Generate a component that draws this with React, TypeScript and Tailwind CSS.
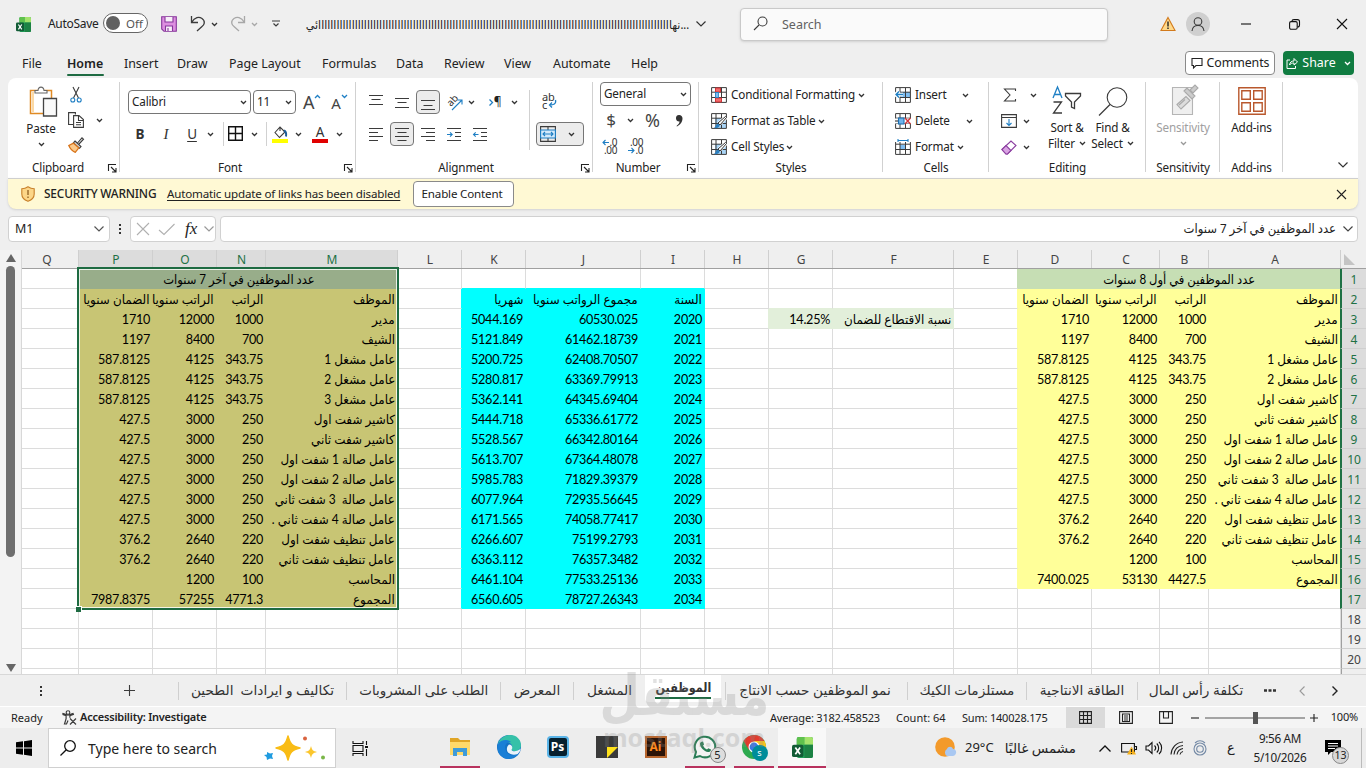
import type { ReactNode } from 'react';

type IconProps = { w?: number; h?: number; children: ReactNode; className?: string };

function Icon({ w = 16, h = 16, children, className = '' }: IconProps) {
  return (
    <svg width={w} height={h} viewBox={`0 0 ${w} ${h}`} fill="none" stroke="#3b3b3b" strokeWidth="1.1" className={`block shrink-0 overflow-visible ${className}`}>
      {children}
    </svg>
  );
}

// fixed width slot, content centered
function Slot({ className, children }: { className: string; children?: ReactNode }) {
  return <div className={`flex shrink-0 items-center justify-center ${className}`}>{children}</div>;
}

function Chevron({ className = '', color = '#333' }: { className?: string; color?: string }) {
  return (
    <svg width="7" height="5" viewBox="0 0 7 5" className={`block shrink-0 ${className}`}>
      <path d="M1 1l2.500 2.500L6 1" fill="none" stroke={color} strokeWidth="1.3" />
    </svg>
  );
}

function BigChevron({ color = '#333' }: { color?: string }) {
  return (
    <svg width="12" height="8" viewBox="0 0 12 8" className="block shrink-0">
      <path d="M1.500 1.500L6 6l4.500-4.500" fill="none" stroke={color} strokeWidth="1.2" />
    </svg>
  );
}

function ExcelLogo({ size }: { size: number }) {
  return (
    <svg width={size} height={size} viewBox="0 0 22 22" className="block">
      <rect x="5" y="0" width="17" height="22" rx="2" fill="#21a05a" />
      <path d="M5 2a2 2 0 012-2h6v8H5z" fill="#5fc14d" />
      <path d="M13 0h7a2 2 0 012 2v6h-9z" fill="#a4e36c" />
      <path d="M13 8h9v12a2 2 0 01-2 2h-7z" fill="#1c8244" />
      <rect x="0" y="8" width="12" height="13" rx="2" fill="#125c36" />
      <path d="M3.500 11l5 7M8.500 11l-5 7" stroke="#fff" strokeWidth="1.8" />
    </svg>
  );
}

function TitleBar() {
  return (
    <div className="flex h-12 items-center">
      <Slot className="w-[47px]"><ExcelLogo size={15} /></Slot>
      <div className="ml-px w-[55px] text-[12px] tracking-[-0.3px]">AutoSave</div>
      <div className="-mt-0.5 flex h-[20px] w-[45px] items-center rounded-full border border-[#666] bg-white pl-0.5">
        <div className="h-3.5 w-3.5 shrink-0 rounded-full bg-[#616161]" />
        <span className="ml-1.5 pt-px text-[11.500px] text-[#555]">Off</span>
      </div>
      <Slot className="ml-[13px] w-4">
        <Icon>
          <path d="M.7.7h14.600v14.600H3L.7 13z" fill="#dd8fe0" stroke="#86379b" />
          <path d="M4 1v5h8V1M4.500 15v-5h7v5" fill="#f7eff8" stroke="#86379b" />
          <path d="M7 12v3" stroke="#86379b" />
        </Icon>
      </Slot>
      <Slot className="ml-[13px] w-4">
        <Icon><path d="M1.500 0v6.500H8M1.500 6.500C5 1 9 .5 12 2.500c4 3 2 6.500 0 8L7 15" strokeWidth="1.3" /></Icon>
      </Slot>
      <Slot className="w-4"><Chevron /></Slot>
      <Slot className="ml-2 w-4">
        <Icon><path d="M14.500 0v6.500H8M14.500 6.500C11 1 7 .5 4 2.500c-4 3-2 6.500 0 8L9 15" stroke="#a8a8a8" strokeWidth="1.3" /></Icon>
      </Slot>
      <Slot className="w-4"><Chevron color="#a8a8a8" /></Slot>
      <Slot className="ml-1.5 w-4">
        <Icon w={8} h={8}><path d="M0 1h8M1.500 3.500L4 6l2.500-2.500" strokeWidth="1.2" /></Icon>
      </Slot>
      <div dir="rtl" className="-mr-[36px] ml-[20px] w-[421px] shrink-0 origin-left scale-x-[.915] pt-px text-[12px] whitespace-nowrap">
        ...نها{'ا'.repeat(115)}ئي
      </div>
      <Slot className="w-[23px]"><BigChevron /></Slot>
      <div className="ml-[28px] flex h-[33px] w-[368px] shrink-0 items-center rounded border border-[#c9c9c9] bg-[#fafafa] text-[12.500px] text-[#616161] shadow-sm">
        <Icon className="ml-3">
          <circle cx="9.500" cy="5.500" r="4.500" /><path d="M6 9l-5 5" />
        </Icon>
        <span className="ml-[13px] pt-0.5">Search</span>
      </div>
      <Slot className="ml-[52px] w-4">
        <Icon>
          <path d="M8 1.500L15 14.500H1z" fill="#ffd98a" stroke="#d27a1c" /><path d="M8 5.500v5M8 11.500v1.500" stroke="#222" strokeWidth="1.4" />
        </Icon>
      </Slot>
      <Slot className="ml-[10px] h-6 w-6 rounded-full bg-[#cfcfcf]">
        <Icon><circle cx="8" cy="5.500" r="3.800" /><path d="M2 15c.5-7.500 11.500-7.500 12 0" /></Icon>
      </Slot>
      <Slot className="ml-[30px] w-3"><Icon w={10} h={10}><path d="M0 5h10" stroke="#111" /></Icon></Slot>
      <Slot className="ml-9 w-3">
        <Icon w={11} h={11}><rect x=".6" y="2.600" width="7.600" height="7.600" rx="1.500" stroke="#111" /><path d="M2.800 2.500C3 1 3.500.6 5 .6h3.500c1.400 0 2 .6 2 2V6c0 1.300-.6 2-2 2" stroke="#111" /></Icon>
      </Slot>
      <Slot className="ml-9 w-3"><Icon w={10} h={10}><path d="M0 0l10 10M10 0L0 10" stroke="#111" /></Icon></Slot>
    </div>
  );
}

function MenuTabs() {
  return (
    <div className="flex h-[30px] items-center text-[12.400px] [&>div]:pt-[2px]">
      <div className="w-[45px] pl-[22px]">File</div>
      <div className="ml-[22px] flex w-[57px] flex-col font-semibold">
        <span className="mt-[1px] h-[20px] leading-[20px]">Home</span>
        <span className="h-[2px] w-[37px] rounded bg-[#1e6b42]" />
      </div>
      <div className="w-[53px]">Insert</div>
      <div className="w-[52px]">Draw</div>
      <div className="w-[93px]">Page Layout</div>
      <div className="w-[74px]">Formulas</div>
      <div className="w-[48px]">Data</div>
      <div className="w-[60px]">Review</div>
      <div className="w-[49px]">View</div>
      <div className="w-[78px]">Automate</div>
      <div>Help</div>
      <div className="ml-auto flex h-6 w-[90px] items-center justify-center gap-1 rounded border border-[#8a8a8a] bg-white !pt-0">
        <Icon w={12} h={12}><path d="M1 1.500h10v7H5L2.500 11V8.500H1z" stroke="#222" /></Icon>
        <span className="pt-px tracking-[-0.1px]">Comments</span>
      </div>
      <div className="mr-3 ml-2 flex h-6 w-[71px] items-center justify-center gap-1 rounded bg-[#107c41] !pt-0 text-white">
        <Icon w={12} h={12}><path d="M4 3H1v8.500h8.500V9M3.500 8c.5-3 2-4 4.500-4V1.500L11.500 5 8 8V6C6 6 4.500 6.500 3.500 8z" stroke="#fff" strokeWidth="1" /></Icon>
        <span className="pt-px">Share</span>
        <Chevron color="#fff" className="ml-1" />
      </div>
    </div>
  );
}

function Group({ className, label, labelPad = '', launcher, children }: { className: string; label: string; labelPad?: string; launcher?: boolean; children: ReactNode }) {
  return (
    <div className={`relative flex shrink-0 flex-col ${className}`}>
      <div className="h-[80px]">{children}</div>
      <div className={`flex h-[20px] items-center justify-center ${labelPad}`}>{label}</div>
      <div className="absolute top-1 right-0 h-[90px] w-px bg-[#d1d1d1]" />
      {launcher && (
        <Icon w={9} h={9} className="absolute right-[3px] bottom-[5px]">
          <path d="M.5 7V.5H8M3 3l5 5M8 4v4H4" stroke="#222" />
        </Icon>
      )}
    </div>
  );
}

const alignLines: Record<string, string> = {
  left: 'M0 1.500h14M0 5.500h9M0 9.500h14M0 13.500h9',
  center: 'M0 1.500h14M2.500 5.500h9M0 9.500h14M2.500 13.500h9',
  right: 'M0 1.500h14M5 5.500h9M0 9.500h14M5 13.500h9',
  top: 'M0 .5h14M2.500 4.500h9M0 9.500h14',
  middle: 'M0 3.500h14M2.500 7.500h9M0 12.500h14',
  bottom: 'M0 5.500h14M2.500 10.500h9M0 14.500h14',
  indent: 'M0 1.500h14M8 5.500h6M8 9.500h6M0 13.500h14',
};

function Lines({ kind, arrow }: { kind: string; arrow?: 'in' | 'out' }) {
  return (
    <Icon w={14} h={15}>
      <path d={alignLines[kind]} />
      {arrow === 'in' && <path d="M0 7.500h5M3 5.300l2.200 2.200L3 9.700" stroke="#1f7fc4" />}
      {arrow === 'out' && <path d="M5.500 7.500h-5M2.700 5.300L.5 7.500l2.200 2.200" stroke="#1f7fc4" />}
    </Icon>
  );
}

function TableIcon({ kind }: { kind: string }) {
  return (
    <Icon>
      {kind === 'style' && <rect x="4" y="5" width="11" height="10" fill="#a9d4f5" stroke="none" />}
      {kind === 'insert' && <rect x="6" y="5" width="9" height="5" fill="#7fbdf0" stroke="none" />}
      {kind === 'format' && <rect x="5" y="6" width="6" height="5" fill="#7fbdf0" stroke="none" />}
      <path d="M.6.6h14.800v14.800H.6zM5 1v14M10.500 1v14M1 5.200h14M1 10.500h14" strokeWidth="1" />
      {kind === 'cond' && <path d="M4.500 1h5v4h-5zM4.500 11h6v4h-6z" fill="#f16b6b" stroke="#d13438" strokeWidth="1" />}
      {kind === 'cond' && <rect x="4.500" y="5.500" width="3" height="5" fill="#7fbdf0" stroke="#1f7fc4" strokeWidth=".8" />}
      {kind === 'style' && (
        <>
          <path d="M15 4l-7 7" stroke="#fff" strokeWidth="4.500" />
          <path d="M15.500 4.500L9 12l-2-2 7.500-6.500z" fill="#fff" stroke="#333" strokeWidth="1" />
          <path d="M7 10.500l1.800 1.800c-1 3-3.500 3-5.800 2.700 2-1 1.500-3.500 4-4.500z" fill="#2b7fc0" stroke="none" />
        </>
      )}
      {kind === 'insert' && <path d="M8 7.500H0M4 4L.5 7.500 4 11" stroke="#fff" strokeWidth="3.500" />}
      {kind === 'insert' && <path d="M8 7.500H1M4 4.500l-3 3 3 3" stroke="#1f7fc4" strokeWidth="1.300" />}
      {kind === 'delete' && (
        <>
          <path d="M0 5.500h16v5H0z" fill="#fff" stroke="none" />
          <path d="M0 8h4" stroke="#333" />
          <rect x="3.500" y="5" width="5.500" height="6" fill="#6fb4ec" stroke="#1f6fb0" />
          <path d="M10 5l5.500 6M15.500 5L10 11" stroke="#d13438" strokeWidth="1.300" />
        </>
      )}
      {kind === 'format' && <path d="M0 0h16v3H0z" fill="#fff" stroke="none" />}
      {kind === 'format' && <path d="M3 1.500h10M3 0v3M13 0v3" stroke="#1f7fc4" />}
    </Icon>
  );
}

function LabelRow({ kind, text, gap = 'ml-1' }: { kind: string; text: string; gap?: string }) {
  return (
    <div className="flex h-[26px] items-center">
      <TableIcon kind={kind} />
      <span className="ml-1">{text}</span>
      <Chevron className={gap} />
    </div>
  );
}

function Ribbon() {
  return (
    <div className="mx-2 flex h-[100px] rounded-t-lg bg-white text-[11.700px] tracking-[-0.15px] whitespace-nowrap text-[#222]">
      <Group className="w-[112px]" label="Clipboard" labelPad="pr-3" launcher>
        <div className="flex">
          <div className="ml-[17px] flex w-8 flex-col items-center pt-2">
            <Icon w={28} h={31} className="ml-1">
              <path d="M1.500 4.500h21v23h-21z" fill="#fff" stroke="#e08a24" strokeWidth="1.500" />
              <path d="M3 6h2v20H3z" fill="#fbd9a5" stroke="none" />
              <path d="M6 7V4.500h3c.5-4.500 5.500-4.500 6 0h3V7z" fill="#fff" stroke="#666" />
              <path d="M14.500 12.500h13v17.500h-13z" fill="#fafafa" stroke="#444" strokeWidth="1.300" />
            </Icon>
            <span className="mt-px leading-5">Paste</span>
            <Chevron className="mt-[4px]" />
          </div>
          <div className="ml-[11px] flex w-4 flex-col items-center gap-[9px] pt-[9px]">
            <Icon w={12} h={16}>
              <path d="M3 0l5.500 11M9 0L3.500 11" /><circle cx="2.800" cy="13" r="2" stroke="#1f7fc4" /><circle cx="9.200" cy="13" r="2" stroke="#1f7fc4" />
            </Icon>
            <Icon><path d="M5 12.500H.6V.6h6.800v2M5.600 3.600H11l4.400 4v7.800H5.600zM10.500 4v4.500h5M8 10.500h5M8 12.800h5" /></Icon>
            <Icon>
              <path d="M9.500 6L14 .8l1.500 1.400L11 7" fill="#fff" /><path d="M7 4l6 5.500-1.500 1.800-6-5.500z" fill="#ddd" />
              <path d="M5.500 6.200L.8 8.500c1.500 3.500 3 5.500 6.500 6.800l3.500-4.500z" fill="#fbc98a" stroke="#d8741a" strokeWidth="1.300" />
            </Icon>
          </div>
          <Slot className="ml-[7px] h-[84px] w-4"><Chevron /></Slot>
        </div>
      </Group>

      <Group className="w-[236px]" label="Font" labelPad="pr-4" launcher>
        <div className="flex h-[36px] items-end pl-2">
          <div className="flex h-6 w-[123px] items-center justify-between rounded border border-[#767676] px-[3px]">Calibri<Chevron /></div>
          <div className="ml-0.5 flex h-6 w-[43px] items-center justify-between rounded border border-[#767676] px-[3px]">11<Chevron /></div>
          <div className="ml-[7px] flex text-[18px] leading-6 text-[#444]">A<Chevron color="#1f7fc4" className="mt-1 rotate-180" /></div>
          <div className="ml-[10px] flex text-[15px] leading-[22px] text-[#444]">A<Chevron color="#1f7fc4" className="mt-0.5" /></div>
        </div>
        <div className="mt-2 flex h-6 items-center text-[13.500px] text-[#333]">
          <Slot className="ml-2 w-6 font-bold">B</Slot>
          <Slot className="w-7 font-['Liberation_Serif'] text-[15px] italic">I</Slot>
          <Slot className="w-6 underline underline-offset-2">U</Slot>
          <Slot className="w-3"><Chevron /></Slot>
          <Slot className="w-[10px]"><span className="ml-1 h-6 w-px bg-[#d1d1d1]" /></Slot>
          <Slot className="w-[20px]"><Icon><path d="M.7.7h13.600v13.600H.7zM7.500 1v13M1 7.500h13" stroke="#111" strokeWidth="1.400" /></Icon></Slot>
          <Slot className="w-[17px]"><Chevron /></Slot>
          <Slot className="w-[6px]"><span className="h-6 w-px bg-[#d1d1d1]" /></Slot>
          <Slot className="w-[22px]">
            <Icon h={17}><path d="M3 6.500L8 1l5 5-5.500 5.500zM8 1v4" /><path d="M12 4.500c2 1 2.500 3 2 6" stroke="#1f5f9a" strokeWidth="2" /><path d="M0 13h16v4H0z" fill="#ffff00" stroke="none" /></Icon>
          </Slot>
          <Slot className="w-[15px]"><Chevron /></Slot>
          <Slot className="ml-1 w-[20px]">
            <div className="flex flex-col items-center"><span className="h-[13px] leading-[13px]">A</span><span className="h-1 w-4 bg-[#e00000]" /></div>
          </Slot>
          <Slot className="w-[18px]"><Chevron /></Slot>
        </div>
      </Group>

      <Group className="w-[237px]" label="Alignment" labelPad="pr-[17px]" launcher>
        <div className="flex">
          <div className="w-[173px]">
            <div className="flex h-[36px] items-end">
              <Slot className="h-6 w-[40px]"><Lines kind="top" /></Slot>
              <Slot className="h-6 w-[12px]"><Lines kind="middle" /></Slot>
              <Slot className="ml-[8px] h-6 w-6 rounded border border-[#767676] bg-[#ececec]"><Lines kind="bottom" /></Slot>
              <Slot className="ml-[3px] h-6 w-[22px]">
                <Icon w={17} h={17}>
                  <text transform="translate(5 13) rotate(-48)" fontSize="10" fill="#333" stroke="none">ab</text>
                  <path d="M6 16L16 6M11.500 6H16v4.500" stroke="#1f7fc4" />
                </Icon>
              </Slot>
              <Slot className="h-6 w-[13px]"><Chevron /></Slot>
              <Slot className="ml-[7px] h-6 w-[20px] text-[12px]">
                <Icon w={5} h={7}><path d="M.5.5l3 3-3 3" stroke="#1f7fc4" strokeWidth="1.300" /></Icon>¶
              </Slot>
              <Slot className="h-6 w-[18px]"><Chevron /></Slot>
            </div>
            <div className="mt-2 flex h-6 items-center">
              <Slot className="w-[40px]"><Lines kind="left" /></Slot>
              <Slot className="-ml-[6px] h-6 w-6 rounded border border-[#767676] bg-[#ececec]"><Lines kind="center" /></Slot>
              <Slot className="w-[28px]"><Lines kind="right" /></Slot>
              <Slot className="w-[24px]"><Lines kind="indent" arrow="in" /></Slot>
              <Slot className="w-[28px]"><Lines kind="indent" arrow="out" /></Slot>
            </div>
          </div>
          <div className="mt-[12px] h-[60px] w-px bg-[#d1d1d1]" />
          <div className="ml-[6px] pt-[14px]">
            <Icon w={16} h={18} className="ml-1.5">
              <text x="0" y="9" fontSize="11" fill="#333" stroke="none">ab</text><text x="0" y="17" fontSize="11" fill="#333" stroke="none">c</text>
              <path d="M13.500 8c1 4-2 5-6 5M10 10.500L7.500 13l2.500 2.500" stroke="#1f7fc4" strokeWidth="1.300" />
            </Icon>
            <div className="mt-[12px] flex h-6 w-12 items-center rounded border border-[#767676] bg-[#ececec]">
              <Icon className="ml-[3px]">
                <path d="M.6.6h14.800v14.800H.6zM8 1v3M8 12v3" /><path d="M.6 4h14.800v8H.6z" fill="#d5eafb" stroke="#1f7fc4" />
                <path d="M3 8h10M5 6L3 8l2 2M11 6l2 2-2 2" stroke="#1f7fc4" />
              </Icon>
              <Chevron className="ml-3" />
            </div>
          </div>
        </div>
      </Group>

      <Group className="w-[106px]" label="Number" labelPad="pr-4" launcher>
        <div className="mt-1 ml-[7px] flex h-6 w-[91px] items-center justify-between rounded border border-[#767676] px-[3px]">General<Chevron /></div>
        <div className="flex h-[28px] items-center text-[17px] text-[#444]">
          <Slot className="ml-2 w-5">$</Slot>
          <Slot className="w-[18px]"><Chevron /></Slot>
          <Slot className="w-[27px] text-[18px]">%</Slot>
          <Slot className="w-[26px]"><Icon w={8} h={13}><path d="M4 1a3.300 3.300 0 013.500 3.500C7.500 8 5 11 2 12.500L1.500 12C3.500 10.500 4.500 9 4.600 7.600A3.300 3.300 0 014 1z" fill="#333" stroke="none" /></Icon></Slot>
        </div>
        <div className="flex pt-[4px] text-[10px] leading-[8px] tracking-[-0.4px] text-[#333]">
          <div className="ml-[8px] flex w-4 flex-col items-end">
            <span className="flex items-center"><Icon w={7} h={7}><path d="M7 3.500H1M3.500 1L1 3.500 3.500 6" stroke="#1f7fc4" /></Icon>.0</span>
            <span>.00</span>
          </div>
          <div className="ml-[10px] flex w-4 flex-col items-end">
            <span>.00</span>
            <span className="flex items-center"><Icon w={7} h={7}><path d="M0 3.500h6M3.500 1L6 3.500 3.500 6" stroke="#1f7fc4" /></Icon>.0</span>
          </div>
        </div>
      </Group>

      <Group className="w-[184px]" label="Styles">
        <div className="pt-1 pl-3">
          <LabelRow kind="cond" text="Conditional Formatting" gap="ml-[3px]" />
          <LabelRow kind="style" text="Format as Table" gap="ml-[2px]" />
          <LabelRow kind="style" text="Cell Styles" gap="ml-[2px]" />
        </div>
      </Group>

      <Group className="w-[106px]" label="Cells">
        <div className="pt-1 pl-3">
          <LabelRow kind="insert" text="Insert" gap="ml-[15px]" />
          <LabelRow kind="delete" text="Delete" gap="ml-[16px]" />
          <LabelRow kind="format" text="Format" gap="ml-[3px]" />
        </div>
      </Group>

      <Group className="w-[157px]" label="Editing">
        <div className="flex">
          <div className="ml-3 flex w-[42px] flex-col pt-1">
            <div className="flex h-[26px] items-center"><Icon w={14} h={14} className="ml-0.5"><path d="M12.500 3V1H1.500L7 7l-5.500 6h11v-2" /></Icon><Chevron className="ml-[13px]" /></div>
            <div className="flex h-[26px] items-center"><Icon h={14}><path d="M.6.6h14.800v12.800H.6zM.6 3.500h14.800" /><path d="M8 5v6.500M5.500 9L8 11.500 10.500 9" stroke="#1f7fc4" /></Icon><Chevron className="ml-[6px]" /></div>
            <div className="flex h-[26px] items-center"><Icon h={15}><path d="M1 9.500L10 1l5 4.500-8.500 8.500H5z" fill="#fff" stroke="#8c3fa0" /><path d="M1 9.500L5 5.500l5 5L6.500 14H5z" fill="#d9a3e3" stroke="#8c3fa0" /></Icon><Chevron className="ml-[6px]" /></div>
          </div>
          <div className="ml-[3px] flex w-[42px] flex-col items-center pt-[9px] leading-4">
            <Icon w={30} h={29}>
              <path d="M13.500 6.500h15v2.500L22.500 15v6.500l-3-1.500v-5L13.500 9z" strokeWidth="1.300" />
              <path d="M1 11L5.500 0 10 11M2.500 7.500h6" stroke="#1f7fc4" strokeWidth="1.300" /><path d="M1.500 15h8L1.500 26h8.500" strokeWidth="1.300" />
            </Icon>
            <span className="mt-[3px]">Sort &amp;</span>
            <span className="flex items-center gap-1">Filter<Chevron /></span>
          </div>
          <div className="flex w-[49px] flex-col items-center pt-[9px] leading-4">
            <Icon w={30} h={29}><circle cx="19" cy="10.500" r="9.800" /><path d="M12 17.500L1 28.500" strokeWidth="1.300" /></Icon>
            <span className="mt-[3px]">Find &amp;</span>
            <span className="flex items-center gap-1">Select<Chevron /></span>
          </div>
        </div>
      </Group>

      <Group className="w-[74px]" label="Sensitivity">
        <div className="flex flex-col items-center pt-[6px] leading-4 text-[#a0a0a0]">
          <Icon w={28} h={32} className="ml-1">
            <path d="M1.500 3.500h20v27h-20z" fill="#efefef" stroke="#b5b5b5" />
            <path d="M6 20.500l9-8 4 4-9 8.500zM8 21l6-5.500" fill="#ddd" stroke="#aaa" /><path d="M13 7l3-3 8 8-3 3zM19 6l5-5 3 3-5 5z" fill="#ccc" stroke="#aaa" />
          </Icon>
          <span className="mt-[3px]">Sensitivity</span>
          <Chevron color="#999" className="mt-1.5" />
        </div>
      </Group>

      <Group className="w-[63px]" label="Add-ins">
        <div className="flex flex-col items-center pt-[9px] leading-4">
          <Icon w={28} h={28}><path d="M.8.8h26.400v26.400H.8zM3.800 3.800h8.500v8.500H3.800zM15.700 3.800h8.500v8.500h-8.500zM3.800 15.700h8.500v8.500H3.800zM15.700 15.700h8.500v8.500h-8.500z" stroke="#b9582d" strokeWidth="1.400" /></Icon>
          <span className="mt-[4px]">Add-ins</span>
        </div>
      </Group>
      <div className="flex flex-1 items-end justify-end pr-[9px] pb-[9px]"><BigChevron /></div>
    </div>
  );
}

function SecurityBar() {
  return (
    <div className="mx-2 flex h-[31px] items-center rounded-b-lg border-t border-[#cfcfcf] bg-[#fff9d4] text-[11.600px] tracking-[-0.18px] whitespace-nowrap shadow">
      <Icon w={14} h={16} className="ml-[13px]">
        <path d="M7 .8c2 1.400 4 2 6.200 2V8c0 4-2.500 6-6.200 7.300C3.300 14 .8 12 .8 8V2.800C3 2.800 5 2.200 7 .8z" fill="#fcd688" stroke="#c8802a" /><path d="M7 4v5M7 10.500V12" stroke="#7a4a10" />
      </Icon>
      <span className="ml-[9px] w-[123px] text-[11.900px] font-medium">SECURITY WARNING</span>
      <span className="w-[246px] underline underline-offset-2">Automatic update of links has been disabled</span>
      <span className="flex h-[26px] w-[101px] items-center justify-center rounded border border-[#8a8a8a] bg-white pr-[3px]">Enable Content</span>
      <Icon w={9} h={9} className="mr-3 ml-auto"><path d="M0 0l9 9M9 0L0 9" stroke="#222" /></Icon>
    </div>
  );
}

function FormulaBar() {
  return (
    <div className="mx-2 mt-[7px] flex h-[26px] text-[12.500px]">
      <div className="flex w-[102px] items-center justify-between rounded border border-[#d1d1d1] bg-white pr-1 pl-1.5">M1<BigChevron color="#555" /></div>
      <Slot className="w-[20px]"><Icon w={2} h={12}><path d="M1 1v2M1 5v2M1 9v2" stroke="#333" strokeWidth="2" /></Icon></Slot>
      <div className="flex w-[86px] items-center rounded border border-[#d1d1d1] bg-white">
        <Icon w={12} h={12} className="ml-1.5"><path d="M0 0l12 12M12 0L0 12" stroke="#b0b0b0" /></Icon>
        <Icon w={16} h={11} className="ml-[10px]"><path d="M0 6l5 4.500L15.500 0" stroke="#b0b0b0" /></Icon>
        <span className="ml-[10px] w-[18px] font-['Liberation_Serif'] text-[17px] italic">fx</span>
        <BigChevron color="#999" />
      </div>
      <div className="ml-1 flex flex-1 items-center justify-end gap-[6px] rounded border border-[#d1d1d1] bg-white pr-[3px]">
        <span dir="rtl" className="origin-right scale-x-[.93]">عدد الموظفين في آخر 7 سنوات</span>
        <BigChevron color="#444" />
      </div>
    </div>
  );
}

const columns = [
  { name: 'Q', w: 57 }, { name: 'P', w: 74 }, { name: 'O', w: 64 }, { name: 'N', w: 49 }, { name: 'M', w: 132 },
  { name: 'L', w: 64 }, { name: 'K', w: 64 }, { name: 'J', w: 115 }, { name: 'I', w: 64 }, { name: 'H', w: 64 },
  { name: 'G', w: 64 }, { name: 'F', w: 121 }, { name: 'E', w: 64 }, { name: 'D', w: 74 }, { name: 'C', w: 68 },
  { name: 'B', w: 49 }, { name: 'A', w: 132 },
];

const headings = ['الموظف', 'الراتب', 'الراتب سنويا', 'الضمان سنويا'];

const staff = [
  ['مدير', '1000', '12000', '1710'],
  ['الشيف', '700', '8400', '1197'],
  ['عامل مشغل 1', '343.75', '4125', '587.8125'],
  ['عامل مشغل 2', '343.75', '4125', '587.8125'],
  ['عامل مشغل 3', '343.75', '4125', '587.8125'],
  ['كاشير شفت اول', '250', '3000', '427.5'],
  ['كاشير شفت ثاني', '250', '3000', '427.5'],
  ['عامل صالة 1 شفت اول', '250', '3000', '427.5'],
  ['عامل صالة 2 شفت اول', '250', '3000', '427.5'],
  ['عامل صالة  3 شفت ثاني', '250', '3000', '427.5'],
  ['عامل صالة 4 شفت ثاني .', '250', '3000', '427.5'],
  ['عامل تنظيف شفت اول', '220', '2640', '376.2'],
  ['عامل تنظيف شفت ثاني', '220', '2640', '376.2'],
  ['المحاسب', '100', '1200', ''],
];

// the first eight years run without the third workshop employee
const firstYears = [headings, ...staff.filter((_, i) => i !== 4), ['المجموع', '4427.5', '53130', '7400.025']];
const lastYears = [headings, ...staff, ['المجموع', '4771.3', '57255', '7987.8375']];

const salaries = [
  ['السنة', 'مجموع الرواتب سنويا', 'شهريا'],
  ['2020', '60530.025', '5044.169'],
  ['2021', '61462.18739', '5121.849'],
  ['2022', '62408.70507', '5200.725'],
  ['2023', '63369.79913', '5280.817'],
  ['2024', '64345.69404', '5362.141'],
  ['2025', '65336.61772', '5444.718'],
  ['2026', '66342.80164', '5528.567'],
  ['2027', '67364.48078', '5613.707'],
  ['2028', '71829.39379', '5985.783'],
  ['2029', '72935.56645', '6077.964'],
  ['2030', '74058.77417', '6171.565'],
  ['2031', '75199.2793', '6266.607'],
  ['2032', '76357.3482', '6363.112'],
  ['2033', '77533.25136', '6461.104'],
  ['2034', '78727.26343', '6560.605'],
];

function cellText(col: string, row: number): string {
  const i = row - 2;
  if (i < 0) return '';
  if ('ABCD'.includes(col)) return firstYears[i]?.['ABCD'.indexOf(col)] ?? '';
  if ('MNOP'.includes(col)) return lastYears[i]?.['MNOP'.indexOf(col)] ?? '';
  if ('IJK'.includes(col)) return salaries[i]?.['IJK'.indexOf(col)] ?? '';
  if (row === 3 && col === 'F') return 'نسبة الاقتطاع للضمان';
  if (row === 3 && col === 'G') return '14.25%';
  return '';
}

function cellFill(col: string | undefined, row: number): string | undefined {
  if (!col) return undefined;
  if ('ABCD'.includes(col)) return row === 1 ? '#c6deb4' : row >= 2 && row <= 16 ? '#ffff99' : undefined;
  if ('MNOP'.includes(col)) return row === 1 ? '#98ad8a' : row >= 2 && row <= 17 ? '#c8c574' : undefined;
  if ('IJK'.includes(col)) return row >= 2 && row <= 17 ? '#00ffff' : undefined;
  if ('FG'.includes(col)) return row === 3 ? '#e2efda' : undefined;
  return undefined;
}

function Cell({ index, row }: { index: number; row: number }) {
  const { name, w } = columns[index];
  const fill = cellFill(name, row);
  const right = fill ?? cellFill(columns[index + 1]?.name, row) ?? '#dcdcdc';
  const bottom = cellFill(name, row + 1) ?? fill ?? '#dcdcdc';
  const text = cellText(name, row);
  const arabic = /[\u0600-\u06ff]/.test(text);
  return (
    <div
      className="flex h-5 shrink-0 items-center justify-end border-r border-b pr-[2px] whitespace-pre"
      style={{ width: w, background: fill ?? '#fff', borderRightColor: right, borderBottomColor: bottom }}
    >
      {arabic ? (
        <span dir="rtl" className="origin-right scale-x-[.955] pt-[3px] text-[12.500px] tracking-normal">{text}</span>
      ) : (
        <span className="pt-[3px]">{text}</span>
      )}
    </div>
  );
}

function MergedCell({ className, text }: { className: string; text: string }) {
  return (
    <div className={`flex h-5 shrink-0 items-center justify-center ${className}`}>
      <span dir="rtl" className="scale-x-[.925] pt-[2px] text-[12.500px] tracking-normal">{text}</span>
    </div>
  );
}

function Sheet() {
  return (
    <div className="mt-[8px] flex h-[424px] overflow-hidden">
      <div className="flex w-[22px] flex-col items-center border-r border-[#d8d8d8] bg-[#f3f3f3] pt-[4px] pb-[2px]">
        <Icon w={10} h={8}><path d="M5 0l5 8H0z" fill="#666" stroke="none" /></Icon>
        <div className="mt-1 h-[291px] w-[9px] rounded-full bg-[#6e6e6e]" />
        <Icon w={10} h={8} className="mt-auto"><path d="M5 8l5-8H0z" fill="#666" stroke="none" /></Icon>
      </div>
      <div className="relative w-[1319px] shrink-0 overflow-hidden bg-white">
        <div className="flex h-[19px] border-b border-[#a0a0a0] bg-[#efefef] text-[12px] text-[#444]">
          {columns.map(c => (
            <div
              key={c.name}
              className={`flex shrink-0 items-center justify-center border-r border-[#cfcfcf] pt-[2px] ${c.name === 'Q' ? 'pr-1.5' : 'pl-px'} ${'MNOP'.includes(c.name) ? 'bg-[#dcdcdc] text-[#1e7145]' : ''}`}
              style={{ width: c.w }}
            >
              {c.name}
            </div>
          ))}
        </div>
        <div className="font-['Lato','DejaVu_Sans',sans-serif] text-[12.600px] tracking-[-0.27px] text-black">
          <div className="flex">
            <Cell index={0} row={1} />
            <MergedCell className="w-[319px] bg-[#98ad8a]" text="عدد الموظفين في آخر 7 سنوات" />
            {[5, 6, 7, 8, 9, 10, 11, 12].map(i => <Cell key={i} index={i} row={1} />)}
            <MergedCell className="w-[323px] bg-[#c6deb4]" text="عدد الموظفين في أول 8 سنوات" />
          </div>
          {Array.from({ length: 20 }, (_, r) => (
            <div key={r} className="flex">
              {columns.map((c, i) => <Cell key={c.name} index={i} row={r + 2} />)}
            </div>
          ))}
        </div>
        {/* selection frame and fill handle */}
        <div className="absolute top-[17px] left-[55px] h-[343px] w-[322px] border-2 border-[#1e6b42]">
          <div className="h-full w-full border border-white/80" />
          <div className="absolute -bottom-[4px] -left-[3px] h-[6px] w-[6px] border-t border-r border-white bg-[#1e6b42]" />
        </div>
      </div>
      <div className="relative flex flex-1 flex-col bg-[#efefef] text-[12px] text-[#444]">
        <div className="flex h-[19px] shrink-0 items-end border-b border-[#a0a0a0] pb-[3px] pl-[3px]">
          <Icon w={11} h={11}><path d="M0 0v11h11z" fill="#c4c4c4" stroke="none" /></Icon>
        </div>
        {Array.from({ length: 21 }, (_, i) => (
          <div
            key={i}
            className={`flex h-5 shrink-0 items-center justify-center border-b border-[#cfcfcf] pt-[2px] ${i < 17 ? '-ml-px border-l-2 border-l-[#1e7145] bg-[#dcdcdc] text-[#1e7145]' : 'border-l border-l-[#a0a0a0]'}`}
          >
            {i + 1}
          </div>
        ))}
      </div>
    </div>
  );
}

const Sep = () => <div className="h-[18px] w-px shrink-0 bg-[#cfcfcf]" />;

function SheetTabs() {
  return (
    <div className="flex h-[32px] items-center border-t border-[#d8d8d8] text-[13.700px] whitespace-pre text-[#333]">
      <Slot className="ml-[22px] w-[38px]"><Icon w={2} h={12}><path d="M1 1v2M1 5v2M1 9v2" stroke="#333" strokeWidth="2" /></Icon></Slot>
      <Slot className="ml-[58px] w-[22px]"><Icon w={11} h={11}><path d="M0 5.500h11M5.500 0v11" /></Icon></Slot>
      <div className="w-[38px] shrink-0" />
      <Sep />
      <Slot className="w-[167px]"><span dir="rtl">تكاليف و ايرادات  الطحين</span></Slot>
      <Sep />
      <Slot className="w-[153px]"><span dir="rtl" className="scale-x-[.98]">الطلب على المشروبات</span></Slot>
      <Sep />
      <Slot className="w-[72px]"><span dir="rtl">المعرض</span></Slot>
      <Sep />
      <Slot className="w-[71px]"><span dir="rtl">المشغل</span></Slot>
      <div className="-mt-[5px] flex h-[27px] w-[76px] shrink-0 flex-col items-center rounded-b bg-white text-[13px] font-bold">
        <span dir="rtl" className="h-[22px] scale-x-[.86] leading-[24px]">الموظفين</span>
        <span className="h-[2px] w-[56px] bg-[#1e6b42]" />
      </div>
      <div className="w-[4px] shrink-0" />
      <Sep />
      <Slot className="w-[181px]"><span dir="rtl" className="pr-[3px]">نمو الموظفين حسب الانتاج</span></Slot>
      <Sep />
      <Slot className="w-[118px]"><span dir="rtl">مستلزمات الكيك</span></Slot>
      <Sep />
      <Slot className="w-[110px]"><span dir="rtl">الطاقة الانتاجية</span></Slot>
      <Sep />
      <Slot className="w-[117px]"><span dir="rtl" className="pr-px">تكلفة رأس المال</span></Slot>
      <Slot className="w-[30px]"><Icon w={12} h={3}><path d="M0 1.500h3M4.500 1.500h3M9 1.500h3" strokeWidth="2.500" stroke="#333" /></Icon></Slot>
      <Slot className="w-[34px]"><Icon w={6} h={10}><path d="M5.500.5L1 5l4.500 4.500" stroke="#999" /></Icon></Slot>
      <Slot className="w-[32px]"><Icon w={6} h={10}><path d="M.5.5L5 5 .5 9.500" stroke="#222" strokeWidth="1.400" /></Icon></Slot>
    </div>
  );
}

function StatusBar() {
  return (
    <div className="flex h-[22px] items-center border-t border-white bg-[#f4f4f4] text-[11px] tracking-[-0.2px] whitespace-nowrap text-[#222]">
      <span className="ml-[11px] w-[51px] pt-px tracking-normal">Ready</span>
      <Icon w={15} h={15}>
        <circle cx="6" cy="2.500" r="1.800" /><path d="M.6 4.500l3.500 1.200v3L2.500 14h2L6 10.500M.6 4.500L1 3.500l5 1.500 5-1.500.4 1-3.500 1.200v2M8 8.500l6 6M14 8.500l-6 6" strokeWidth="1.200" />
      </Icon>
      <span className="ml-[3px] font-semibold tracking-[-0.22px]">Accessibility: Investigate</span>
      <span className="ml-auto w-[126px] pt-px">Average: 3182.458523</span>
      <span className="w-[66px] pt-px tracking-normal">Count: 64</span>
      <span className="w-[104px] pt-px">Sum: 140028.175</span>
      <Slot className="h-full w-[39px] bg-[#dadada]"><Icon w={13} h={13}><path d="M.6.6h11.800v11.800H.6zM4.500 1v11M8.500 1v11M1 4.500h11M1 8.500h11" stroke="#222" /></Icon></Slot>
      <Slot className="w-[41px]"><Icon w={14} h={13}><path d="M.6.6h12.800v11.800H.6zM3.500 3h7v7.500h-7zM5 5h4M5 7h4M5 9h4" stroke="#222" /></Icon></Slot>
      <Slot className="w-[39px]"><Icon w={14} h={13}><path d="M.6.6h12.800v11.800H.6zM4.500 1v6H9.500V1" stroke="#222" /></Icon></Slot>
      <Slot className="w-[20px]"><Icon w={8} h={8}><path d="M0 4h8" stroke="#222" /></Icon></Slot>
      <Slot className="w-[100px]"><Icon w={100} h={12}><path d="M0 6h100" stroke="#555" /><path d="M48 0h5v12h-5z" fill="#555" stroke="none" /></Icon></Slot>
      <Slot className="w-[18px]"><Icon w={8} h={8}><path d="M0 4h8M4 0v8" stroke="#222" /></Icon></Slot>
      <span className="mr-[8px] w-[35px] text-right">100%</span>
    </div>
  );
}

function TaskApp({ className = '', active, children }: { className?: string; active?: boolean; children: ReactNode }) {
  return (
    <div className={`flex h-full w-[49px] shrink-0 flex-col items-center ${className}`}>
      <div className="flex h-[38px] items-center">{children}</div>
      {active && <div className="h-[2px] w-[40px] bg-[#b8325e]" />}
    </div>
  );
}

function Taskbar() {
  return (
    <div className="flex h-[40px] items-center bg-[#ededed] text-[#222]">
      <Slot className="w-12"><Icon><path d="M0 2.300L7 1.300v6.300H0zM8 1.200L16 0v7.600H8zM0 8.500h7v6.200L0 13.700zM8 8.500h8V16l-8-1.200z" fill="#000" stroke="none" /></Icon></Slot>
      <div className="flex h-full w-[288px] items-center border border-[#d0d0d0] bg-white">
        <Icon className="ml-[11px]"><circle cx="10" cy="6" r="5.300" stroke="#111" strokeWidth="1.300" /><path d="M6.300 9.800L.5 15.500" stroke="#111" strokeWidth="1.300" /></Icon>
        <span className="ml-3 text-[14px]">Type here to search</span>
        <Icon w={62} h={24} className="ml-auto mr-[9px]">
          <g stroke="none">
            <path d="M24 0c2 8 4 10 12 12-8 2-10 4-12 12-2-8-4-10-12-12 8-2 10-4 12-12z" fill="#f9bc15" stroke="#f9bc15" strokeWidth="1.500" strokeLinejoin="round" />
            <path d="M47 10c1 4 2 5 6 6-4 1-5 2-6 6-1-4-2-5-6-6 4-1 5-2 6-6z" fill="#fbc62d" />
            <path d="M3 16l3 1.500L9 17l-1 3 1 3-3-.5L3 24l-.5-3L0 19l3-.5z" fill="#1f9be0" />
            <circle cx="41" cy="2.500" r="2" fill="#d9633f" /><circle cx="59" cy="21.500" r="2" fill="#7ab648" />
          </g>
        </Icon>
      </div>
      <Slot className="w-12"><Icon w={16} h={15}><path d="M1 0v2.500h10V0M1 15v-2.500h10V15M1 4.500h10v6H1zM14.500 0v4M14.500 8v7" stroke="#111" /><path d="M13 5h3v2h-3z" fill="#111" stroke="none" /></Icon></Slot>

      <TaskApp active className="ml-[51px]">
        <Icon w={22} h={20}><path d="M1 1h8l2 2h10v15H1z" fill="#e0a526" stroke="none" /><path d="M1 5h20v13H1z" fill="#ffd96a" stroke="none" /><path d="M4 19v-8h14v8h-4v-4H8v4z" fill="#3f9bd8" stroke="none" /></Icon>
      </TaskApp>
      <TaskApp>
        <Icon w={24} h={24}>
          <g stroke="none">
            <circle cx="12" cy="12" r="12" fill="#1572c4" />
            <path d="M1 9C3 2 9 0 13 0c7 0 11 5 11 10 0 4-3 6-6 6-4 0-4-2-3-3 1-3-2-6-6-6-4 0-7 2-8 5z" fill="#35c1a8" />
            <path d="M1 9c3-5 10-5 13-2-6 0-7 5-5 9 1 3 5 5 9 4l3-1c-3 4-8 5-11 5C4 23-1 17 1 9z" fill="#1a7fd6" />
            <path d="M12 9.500c3.500 0 4 3.500 2.500 5.500 1 2 6 1.800 9.200-1.500-.5 2.500-1.500 4-3 5.500-4 1.500-9 .5-10.500-3-.8-2.500 0-5 1.800-6.500z" fill="#e9f3fa" />
          </g>
        </Icon>
      </TaskApp>
      <TaskApp>
        <div className="flex h-[22px] w-[22px] items-center justify-center rounded border-2 border-[#5ab4e8] bg-[#06202f] text-[12px] font-bold text-white">Ps</div>
      </TaskApp>
      <TaskApp>
        <Icon w={22} h={22}><path d="M0 0h22v22H0z" fill="#3a3a3a" stroke="none" /><path d="M11 11h11L11 22z" fill="#ffe11a" stroke="none" /></Icon>
      </TaskApp>
      <TaskApp>
        <div className="flex h-[22px] w-[22px] items-center justify-center border-2 border-[#b8672f] bg-[#2c1408] text-[12px] font-bold text-[#ff8a1e]">Ai</div>
      </TaskApp>
      <TaskApp active>
        <div className="relative">
          <Icon w={24} h={24}>
            <path d="M1.500 22.500L3 17A10.300 10.300 0 117 21z" stroke="#2a7d56" strokeWidth="2" fill="#f3f3f3" />
            <path d="M8 7l2-.5 1 3-1 1c1 2 2 3 4 4l1.300-1.300 2.700 1.300c0 2-1.500 2.500-3 2.500-4-.5-8-5-8-8 0-1 .5-1.500 1-2z" fill="#2a7d56" stroke="none" />
          </Icon>
          <span className="absolute -right-[9px] -bottom-[4px] flex h-4 w-4 items-center justify-center rounded-full border border-[#888] bg-[#ddd] text-[11px]">5</span>
        </div>
      </TaskApp>
      <TaskApp active>
        <div className="relative">
          <Icon w={24} h={24}>
            <g stroke="none">
              <circle cx="12" cy="12" r="12" fill="#2da94f" /><path d="M1.600 6a12 12 0 0120.800 0L12 7l-5 8z" fill="#e33b2e" /><path d="M22.400 6A12 12 0 0112 24l5-9-5-9z" fill="#fcc31e" />
              <circle cx="12" cy="12" r="5.500" fill="#fff" /><circle cx="12" cy="12" r="4.400" fill="#3b78e7" />
            </g>
          </Icon>
          <span className="absolute -right-[2px] -bottom-[2px] flex h-4 w-4 items-center justify-center rounded-full bg-[#008c99] text-[9px] text-white">s</span>
        </div>
      </TaskApp>
      <div className="flex h-full w-12 shrink-0 flex-col items-center bg-[#f8f8f8]">
        <div className="flex h-[38px] items-center"><ExcelLogo size={21} /></div>
        <div className="h-[2px] w-full bg-[#b8325e]" />
      </div>

      <Icon w={22} h={22} className="ml-auto"><circle cx="10" cy="10" r="9.800" fill="#f39a2b" stroke="none" /><path d="M12 19a4 4 0 010-7c1-3 5-3 6 0 4 0 4.500 6 0 7z" fill="#a9c8f2" stroke="none" /></Icon>
      <span className="ml-2 w-[37px] text-[13px]">29°C</span>
      <span dir="rtl" className="w-[74px] text-[13.500px] whitespace-nowrap">مشمس غالبًا</span>
      <Slot className="ml-[20px] w-[18px]"><Icon w={12} h={7}><path d="M.5 6.500L6 1l5.500 5.500" stroke="#111" strokeWidth="1.300" /></Icon></Slot>
      <Slot className="ml-[6px] w-[18px]"><Icon w={16} h={14}><path d="M.6 2.500h12.800v8.500H.6zM14 5.500h1.500v3H14" stroke="#111" /><path d="M10.500 5.500L15 13.500H6z" fill="#f7b21b" stroke="none" /><path d="M10.500 8v3M10.500 12v1" stroke="#222" /></Icon></Slot>
      <Slot className="ml-[6px] w-[18px]"><Icon w={17} h={14}><path d="M1 5h2.500L7 1.500v11L3.500 9H1zM9.500 4.500c1.500 1.500 1.500 3.500 0 5M11.800 2.500c2.500 2.500 2.500 6.500 0 9M14 .8c3.500 3.500 3.500 9 0 12.400" stroke="#111" /></Icon></Slot>
      <Slot className="ml-[6px] w-[18px]"><Icon w={14} h={14}><path d="M1 13.500C1.500 6.500 6 1.500 13 1M4 13.500c.5-5 4-8.500 9-9M7 13.500c.5-3 3-5.500 6-6M10 13.500c.3-1.500 1.500-2.700 3-3" stroke="#222" /></Icon></Slot>
      <Slot className="ml-[5px] w-[18px]"><Icon w={14} h={16}><circle cx="7" cy="9" r="6" stroke="#7389a5" /><circle cx="7" cy="9" r="3.300" stroke="#7389a5" /><path d="M2 3c3-3 7-3 10 0" stroke="#7389a5" /></Icon></Slot>
      <Slot className="ml-[12px] w-[20px] text-[13px]">ع</Slot>
      <div className="ml-[9px] flex w-[60px] flex-col items-center text-[11.700px] leading-[19px] tracking-[-0.3px] whitespace-nowrap">
        <span>9:56 AM</span>
        <span>5/10/2026</span>
      </div>
      <div className="relative mr-[4px] ml-[15px] w-[37px] border-r border-[#bbb] py-[12px]">
        <Icon w={16} h={16}><path d="M0 0h16v12H6l-3 3v-3H0z" fill="#000" stroke="none" /><path d="M3 3.500h10M3 6h10M3 8.500h7" stroke="#fff" /></Icon>
        <span className="absolute top-[19px] left-[7px] flex h-[17px] w-[17px] items-center justify-center rounded-full border border-[#888] bg-[#d8d8d8] text-[10.500px]">13</span>
      </div>
    </div>
  );
}

export default function App() {
  return (
    <div className="relative h-[768px] w-[1366px] overflow-hidden bg-[#efefef] font-['Noto_Sans','DejaVu_Sans',sans-serif] text-[#222]">
      <TitleBar />
      <MenuTabs />
      <Ribbon />
      <SecurityBar />
      <FormulaBar />
      <Sheet />
      <SheetTabs />
      <StatusBar />
      <Taskbar />
      {/* watermark */}
      <div className="pointer-events-none absolute top-[659px] left-[600px] flex w-[168px] flex-col items-center text-[#8a8a8a] opacity-25">
        <span dir="rtl" className="h-[66px] scale-x-[.83] text-[56px] leading-[68px] font-bold">مستقل</span>
        <span className="text-[25px] leading-[24px] font-bold">mostaql.com</span>
      </div>
    </div>
  );
}
